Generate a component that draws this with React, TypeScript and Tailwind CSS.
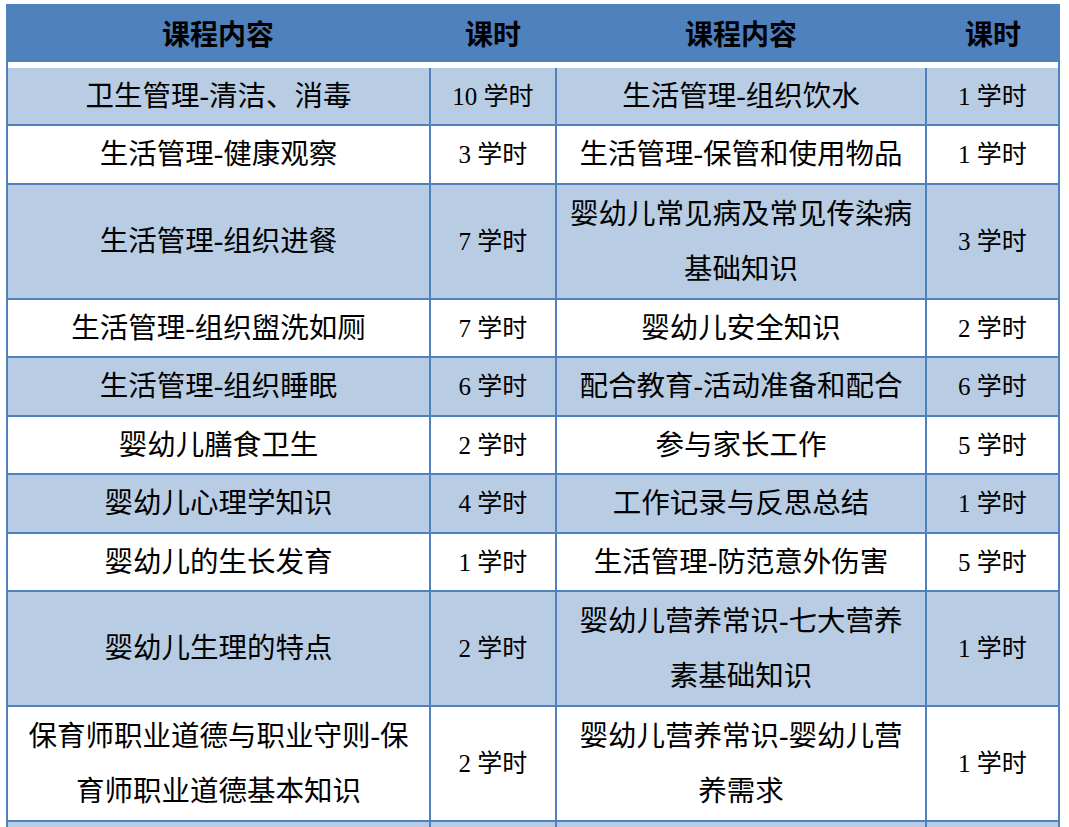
import React from "react"

type Row = {
  h: string
  bg: string
  a: React.ReactNode
  ah: string
  b: React.ReactNode
  bh: string
}

const L = "bg-[#b8cce4]"
const W = "bg-white"

const rows: Row[] = [
  { h: "h-[56px]", bg: L, a: "卫生管理-清洁、消毒", ah: "10 学时", b: "生活管理-组织饮水", bh: "1 学时" },
  { h: "h-[57px]", bg: W, a: "生活管理-健康观察", ah: "3 学时", b: "生活管理-保管和使用物品", bh: "1 学时" },
  {
    h: "h-[113px]",
    bg: L,
    a: "生活管理-组织进餐",
    ah: "7 学时",
    b: (
      <>
        婴幼儿常见病及常见传染病
        <br />
        基础知识
      </>
    ),
    bh: "3 学时",
  },
  { h: "h-[56px]", bg: W, a: "生活管理-组织盥洗如厕", ah: "7 学时", b: "婴幼儿安全知识", bh: "2 学时" },
  { h: "h-[57px]", bg: L, a: "生活管理-组织睡眠", ah: "6 学时", b: "配合教育-活动准备和配合", bh: "6 学时" },
  { h: "h-[56px]", bg: W, a: "婴幼儿膳食卫生", ah: "2 学时", b: "参与家长工作", bh: "5 学时" },
  { h: "h-[57px]", bg: L, a: "婴幼儿心理学知识", ah: "4 学时", b: "工作记录与反思总结", bh: "1 学时" },
  { h: "h-[56px]", bg: W, a: "婴幼儿的生长发育", ah: "1 学时", b: "生活管理-防范意外伤害", bh: "5 学时" },
  {
    h: "h-[113px]",
    bg: L,
    a: "婴幼儿生理的特点",
    ah: "2 学时",
    b: (
      <>
        婴幼儿营养常识-七大营养
        <br />
        素基础知识
      </>
    ),
    bh: "1 学时",
  },
  {
    h: "h-[113px]",
    bg: W,
    a: (
      <>
        保育师职业道德与职业守则-保
        <br />
        育师职业道德基本知识
      </>
    ),
    ah: "2 学时",
    b: (
      <>
        婴幼儿营养常识-婴幼儿营
        <br />
        养需求
      </>
    ),
    bh: "1 学时",
  },
  { h: "h-[56px]", bg: L, a: "", ah: "", b: "", bh: "" },
]

const font = "font-['Liberation_Serif','Noto_Sans_CJK_SC',serif] text-black"

function Cell({ children, cls, size }: { children: React.ReactNode; cls: string; size: string }) {
  return (
    <div className={`${cls} ${size} ${font} flex items-center justify-center text-center whitespace-nowrap leading-[55px]`}>
      <div>{children}</div>
    </div>
  )
}

export default function App() {
  return (
    <div className="w-[1069px] h-[827px] overflow-hidden bg-white pl-[6px] pt-[4px]">
      <div className="w-[1054px]">
        <div className="grid grid-cols-[424px_126px_370px_134px] h-[58px] bg-[#4f81bd] font-['Noto_Sans_CJK_SC',sans-serif] font-bold text-[28px] text-black">
          <div className="flex items-center justify-center">课程内容</div>
          <div className="flex items-center justify-center">课时</div>
          <div className="flex items-center justify-center">课程内容</div>
          <div className="flex items-center justify-center">课时</div>
        </div>
        <div className="h-[6px] border-x-2 border-[#4f81bd] bg-white" />
        <div className="grid grid-cols-[421px_124px_368px_131px] gap-[2px] px-[2px] bg-[#4f81bd]">
          {rows.map((r, i) => (
            <React.Fragment key={i}>
              <Cell cls={`${r.bg} ${r.h}`} size="text-[28.5px]">{r.a}</Cell>
              <Cell cls={`${r.bg} ${r.h}`} size="text-[25px]">{r.ah}</Cell>
              <Cell cls={`${r.bg} ${r.h}`} size="text-[28.5px]">{r.b}</Cell>
              <Cell cls={`${r.bg} ${r.h}`} size="text-[25px]">{r.bh}</Cell>
            </React.Fragment>
          ))}
        </div>
      </div>
    </div>
  )
}
